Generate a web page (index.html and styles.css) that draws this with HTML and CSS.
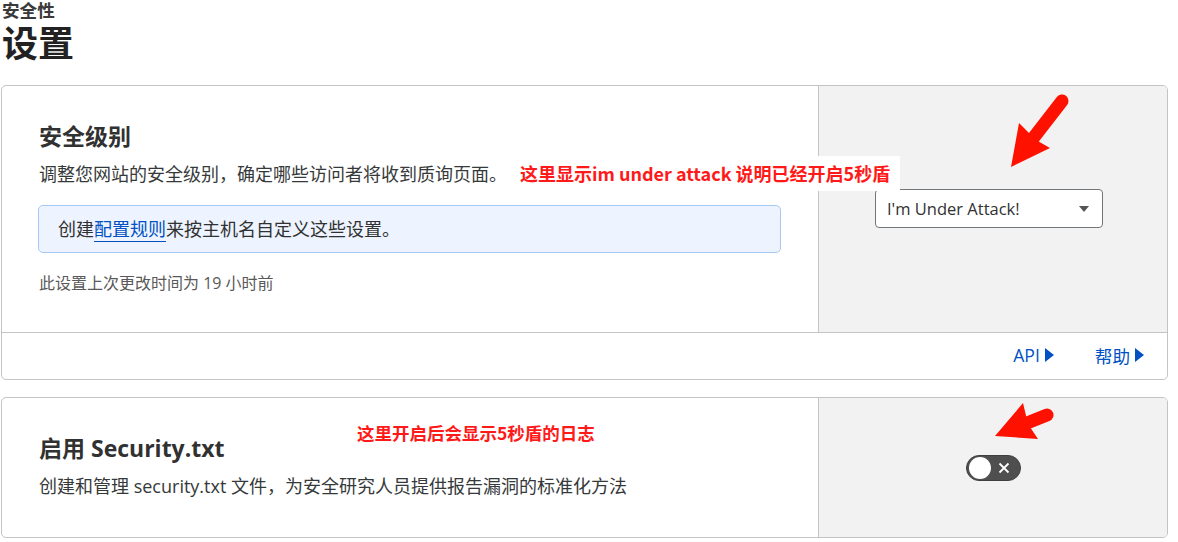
FILE: index.html
```html
<!DOCTYPE html>
<html lang="zh-CN">
<head>
<meta charset="utf-8">
<title>设置</title>
<link rel="stylesheet" href="styles.css">
</head>
<body>
<div class="page">
  <div class="eyebrow">安全性</div>
  <h1 class="page-title">设置</h1>

  <section class="card">
    <div class="card-main">
      <div class="card-body">
        <h2 class="card-title">安全级别</h2>
        <p class="card-desc">调整您网站的安全级别，确定哪些访问者将收到质询页面。</p>
        <div class="info">创建<a class="link" href="#">配置规则</a>来按主机名自定义这些设置。</div>
        <p class="meta">此设置上次更改时间为 19 小时前</p>
      </div>
      <div class="card-control">
        <div class="select">
          <span class="select-value">I'm Under Attack!</span>
          <span class="select-caret"></span>
        </div>
      </div>
    </div>
    <div class="card-footer">
      <a class="footer-link" href="#">API<svg class="tri" viewBox="0 0 9 14" width="9" height="14"><path d="M0 0 L9 7 L0 14 Z"/></svg></a>
      <a class="footer-link" href="#">帮助<svg class="tri" viewBox="0 0 9 14" width="9" height="14"><path d="M0 0 L9 7 L0 14 Z"/></svg></a>
    </div>
  </section>

  <section class="card card-2">
    <div class="card-main">
      <div class="card-body body-2">
        <h2 class="card-title">启用 Security.txt</h2>
        <p class="card-desc">创建和管理 security.txt 文件，为安全研究人员提供报告漏洞的标准化方法</p>
      </div>
      <div class="card-control">
        <div class="toggle">
          <span class="knob"></span>
          <svg class="toggle-x" viewBox="0 0 12 12" width="12" height="12"><path d="M1.5 1.5 L10.5 10.5 M10.5 1.5 L1.5 10.5"/></svg>
        </div>
      </div>
    </div>
  </section>

  <div class="note note-1">这里显示im under attack 说明已经开启5秒盾</div>
  <div class="note note-2">这里开启后会显示5秒盾的日志</div>

  <svg class="arrows" viewBox="0 0 1178 542" width="1178" height="542">
    <line x1="1062" y1="101" x2="1031" y2="141" class="shaft"/>
    <polygon points="1019,123 1011,167 1050,148 1036,140"/>
    <line x1="1047" y1="415" x2="1022" y2="425" class="shaft"/>
    <polygon points="1023,403 995,436 1038,439 1028,424"/>
  </svg>
</div>
</body>
</html>
```

FILE: styles.css
```css
* { box-sizing: border-box; }

html, body {
  margin: 0;
  padding: 0;
  background: #ffffff;
}

body {
  font-family: "Open Sans", "Noto Sans CJK SC", sans-serif;
  color: #313131;
  overflow: hidden;
}

.page {
  position: relative;
  width: 1178px;
  height: 542px;
  padding: 0 10px 0 1px;
}

.eyebrow {
  margin: 0 0 0 1px;
  font-size: 17.6px;
  line-height: 20px;
  font-weight: 700;
  color: #3a3a3a;
}

.page-title {
  margin: 6px 0 0 1px;
  font-size: 36px;
  line-height: 36px;
  font-weight: 700;
  color: #222;
}

.card {
  margin-top: 23px;
  border: 1px solid #c4c4c4;
  border-radius: 5px;
  background: #fff;
  overflow: hidden;
}

.card-2 {
  margin-top: 17px;
}

.card-main {
  display: flex;
}

.card-body {
  flex: 0 0 816px;
  padding: 36px 37px 38px 37px;
}

.body-2 {
  padding-top: 36px;
  padding-bottom: 38px;
}

.card-title {
  margin: 0;
  font-size: 23px;
  line-height: 28px;
  font-weight: 700;
  color: #313131;
}

.card-desc {
  margin: 11px 0 0;
  font-size: 18px;
  line-height: 26px;
  color: #36393a;
}

.info {
  margin-top: 18px;
  margin-left: -1px;
  padding: 10px 19px;
  border: 1px solid #a6c8f5;
  border-radius: 5px;
  background: #edf4ff;
  font-size: 18px;
  line-height: 26px;
  color: #313131;
}

.link {
  color: #0051c3;
  text-decoration: none;
  border-bottom: 1px solid #0051c3;
}

.meta {
  margin: 19px 0 0;
  font-size: 16px;
  line-height: 22px;
  color: #595959;
}

.card-control {
  flex: 1;
  display: flex;
  align-items: center;
  justify-content: center;
  background: #f2f2f2;
  border-left: 1px solid #c4c4c4;
}

.select {
  width: 228px;
  height: 39px;
  margin-right: 8px;
  margin-top: -1px;
  display: flex;
  align-items: center;
  justify-content: space-between;
  padding: 0 13px 0 11px;
  background: #fff;
  border: 1px solid #72777b;
  border-radius: 4px;
  font-size: 16.5px;
  color: #313131;
}

.select-caret {
  width: 0;
  height: 0;
  border-left: 5px solid transparent;
  border-right: 5px solid transparent;
  border-top: 6px solid #555;
}

.card-footer {
  display: flex;
  justify-content: flex-end;
  align-items: center;
  gap: 41px;
  height: 47px;
  padding-right: 23px;
  padding-bottom: 2px;
  border-top: 1px solid #c4c4c4;
}

.footer-link {
  display: flex;
  align-items: center;
  gap: 5px;
  font-size: 17.6px;
  color: #0051c3;
  text-decoration: none;
}

.tri {
  fill: #0051c3;
}

.toggle {
  position: relative;
  width: 55px;
  height: 26px;
  margin-top: 1px;
  border-radius: 13px;
  background: #4f4f4f;
  border: 1px solid #3f3f3f;
  display: flex;
  align-items: center;
  justify-content: flex-end;
  padding: 0 10px;
}

.knob {
  position: absolute;
  left: 2px;
  top: 1px;
  width: 22px;
  height: 22px;
  border-radius: 50%;
  background: #fff;
}

.toggle-x {
  stroke: #fff;
  stroke-width: 1.8;
  fill: none;
}

.note {
  position: absolute;
  font-weight: 700;
  color: #ff1a1a;
  font-family: "Noto Sans CJK SC", sans-serif;
}

.note-1 {
  left: 510px;
  top: 156px;
  height: 35px;
  padding: 0 10px;
  line-height: 35px;
  font-size: 18px;
  background: #fff;
}

.note-2 {
  left: 357px;
  top: 421px;
  line-height: 24px;
  font-size: 17.5px;
}

.arrows {
  position: absolute;
  left: 0;
  top: 0;
  pointer-events: none;
  fill: #ff1100;
}

.arrows .shaft {
  stroke: #ff1100;
  stroke-width: 13;
  stroke-linecap: round;
}
```
